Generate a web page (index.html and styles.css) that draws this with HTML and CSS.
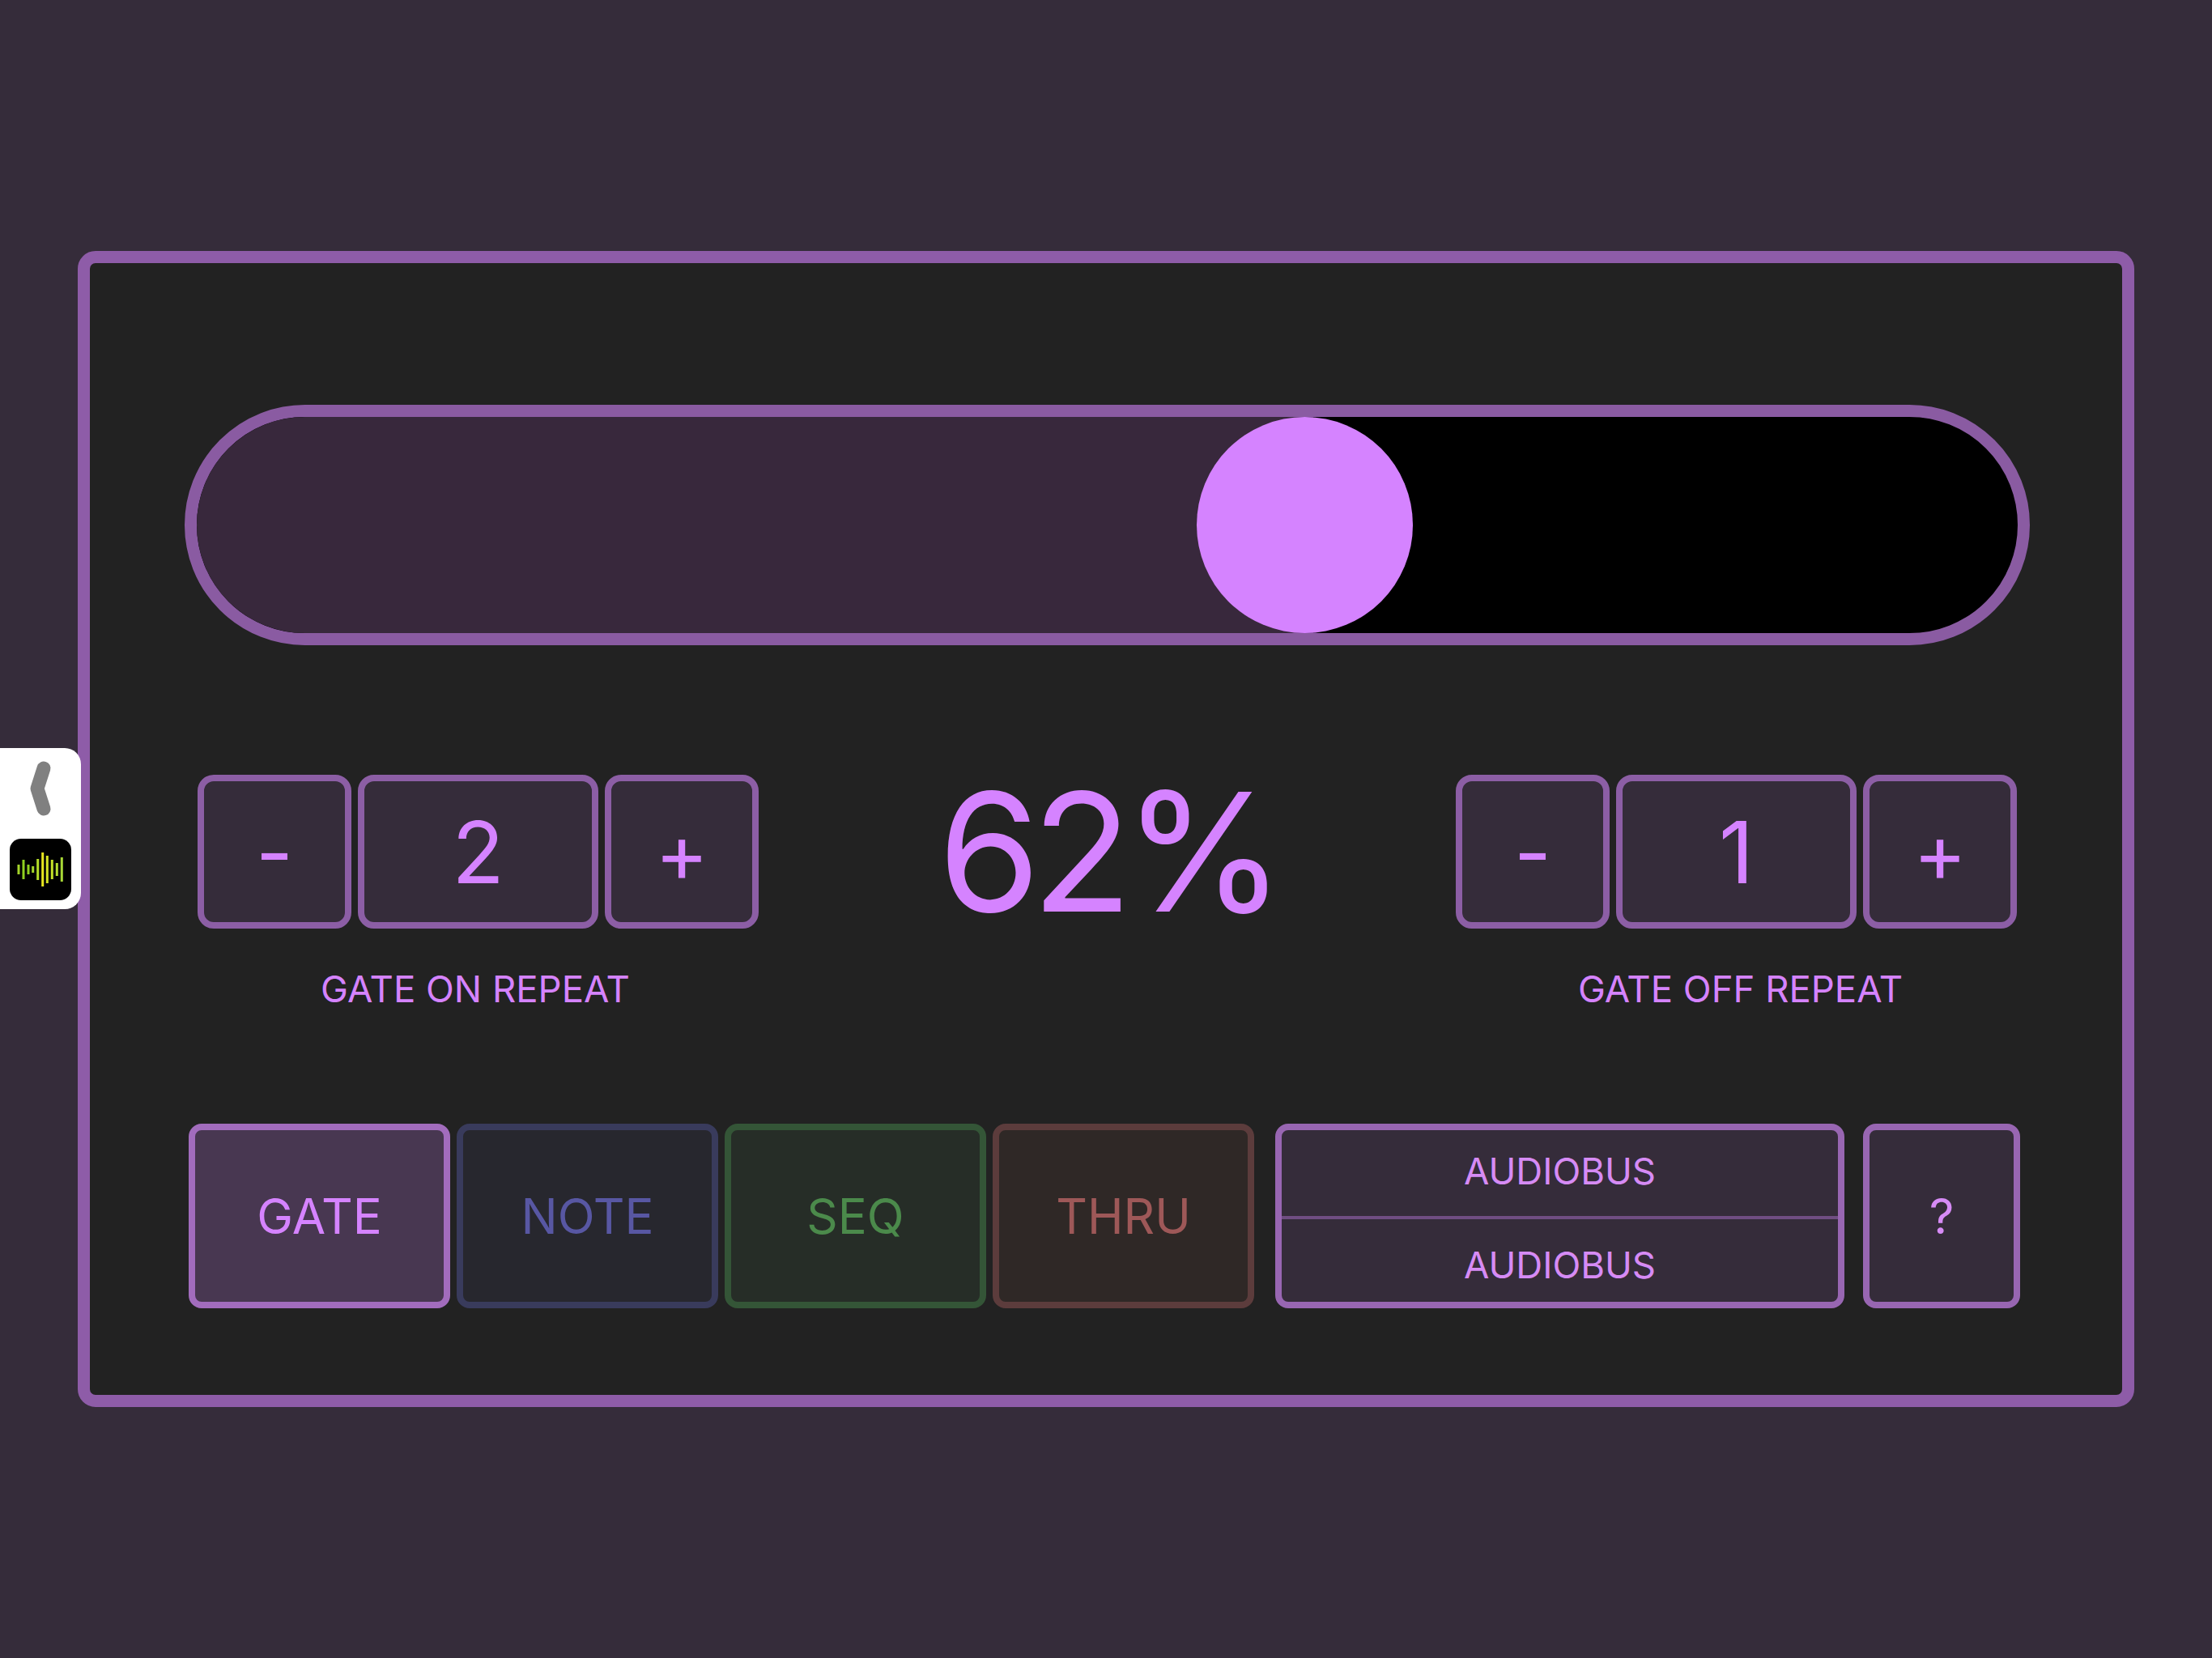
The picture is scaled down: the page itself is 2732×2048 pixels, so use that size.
FILE: index.html
```html
<!DOCTYPE html>
<html>
<head>
    <title>Gate</title>
    <link rel="stylesheet" href="styles.css">
</head>
<body>
    <div class="frame">
        <div class="slider">
            <div class="slider-fill"></div>
            <div class="slider-thumb"></div>
        </div>

        <div class="repeat-row">
            <div class="repeat">
                <div class="stepper">
                    <div class="step">-</div>
                    <div class="step-value">2</div>
                    <div class="step">+</div>
                </div>
                <div class="repeat-label label-on">GATE ON REPEAT</div>
            </div>
            <div class="percent">62%</div>
            <div class="repeat">
                <div class="stepper">
                    <div class="step">-</div>
                    <div class="step-value">1</div>
                    <div class="step">+</div>
                </div>
                <div class="repeat-label label-off">GATE OFF REPEAT</div>
            </div>
        </div>

        <div class="button-row">
            <div class="mode mode-gate">GATE</div>
            <div class="mode mode-note">NOTE</div>
            <div class="mode mode-seq">SEQ</div>
            <div class="mode mode-thru">THRU</div>
            <div class="audiobus">
                <div class="audiobus-top">AUDIOBUS</div>
                <div class="audiobus-bottom">AUDIOBUS</div>
            </div>
            <div class="help">?</div>
        </div>
    </div>

    <div class="side-tab">
        <svg class="side-chevron" width="100" height="90" viewBox="0 0 100 90">
            <polyline points="54,25 46,50 54,75" fill="none" stroke="#808080" stroke-width="17" stroke-linecap="round" stroke-linejoin="round"/>
        </svg>
        <svg class="side-icon" width="76" height="76" viewBox="0 0 76 76">
            <rect width="76" height="76" rx="14" fill="#000"/>
            <rect x="9.5" y="32" width="3" height="12" fill="#a4d42a"/>
            <rect x="15.5" y="26" width="3" height="24" fill="#8fd020"/>
            <rect x="21.5" y="32" width="3" height="12" fill="#8fd020"/>
            <rect x="27.2" y="34" width="3" height="8" fill="#a4d42a"/>
            <rect x="33.2" y="25" width="3" height="26" fill="#b4dc28"/>
            <rect x="39.2" y="17" width="3" height="42" fill="#e8e620"/>
            <rect x="44.8" y="21" width="3" height="34" fill="#d4e424"/>
            <rect x="50.8" y="26" width="3" height="24" fill="#c4e028"/>
            <rect x="56.8" y="30" width="3" height="16" fill="#b4dc30"/>
            <rect x="62.8" y="23" width="3" height="30" fill="#a8d836"/>
        </svg>
    </div>
</body>
</html>
```

FILE: styles.css
```css
body {
    margin: 0;
    padding: 310px 0 0 96px;
    height: 2048px;
    box-sizing: border-box;
    background-color: #352c3a;
    font-family: Inter, "Liberation Sans", sans-serif;
    color: #d583ff;
    overflow: hidden;
}
.frame {
    width: 2540px;
    height: 1428px;
    box-sizing: border-box;
    padding: 175px 114px 0 117px;
    background-color: #222222;
    border: 15px solid #8e5ca8;
    border-radius: 22px;
}

/* slider */
.slider {
    position: relative;
    height: 297px;
    box-sizing: border-box;
    background-color: #000;
    border: 15px solid #8a5ba2;
    border-radius: 149px;
    overflow: hidden;
}
.slider-fill {
    height: 100%;
    width: 61.3%;
    background-color: #38283c;
}
.slider-thumb {
    position: absolute;
    top: 0;
    left: 1235px;
    width: 267px;
    height: 267px;
    border-radius: 50%;
    background-color: #d583ff;
}

/* steppers */
.repeat-row {
    display: flex;
    justify-content: space-between;
    align-items: flex-start;
    height: 431px;
    margin-top: 160px;
    padding: 0 16px;
}
.stepper {
    display: flex;
    gap: 8px;
}
.step, .step-value {
    display: flex;
    justify-content: center;
    align-items: center;
    height: 190px;
    box-sizing: border-box;
    background-color: #352c3a;
    border: 8px solid #8c5ea5;
    border-radius: 20px;
}
.step {
    width: 190px;
    font-size: 100px;
}
.step-value {
    width: 297px;
    font-size: 106px;
}
.repeat-label {
    margin-top: 47px;
    font-size: 45.5px;
    line-height: 56px;
    text-align: center;
}
.label-on {
    margin-right: 7px;
}
.label-off {
    margin-left: 10px;
}
.percent {
    font-size: 204px;
    letter-spacing: -11px;
    line-height: 190px;
}

/* bottom buttons */
.button-row {
    display: flex;
    height: 228px;
    margin-left: 5px;
}
.mode, .help {
    display: flex;
    justify-content: center;
    align-items: center;
    box-sizing: border-box;
    border: 8px solid;
    border-radius: 16px;
    font-size: 60px;
}
.mode {
    width: 323px;
    margin-right: 8px;
}
.mode-gate {
    background-color: #483751;
    border-color: #a26cbd;
    color: #d583ff;
}
.mode-note {
    background-color: #27272e;
    border-color: #393b5c;
    color: #5857a3;
}
.mode-seq {
    background-color: #262d27;
    border-color: #345537;
    color: #4b8a4b;
}
.mode-thru {
    background-color: #2f2826;
    border-color: #5c3c3c;
    color: #9e5858;
}
.audiobus {
    display: flex;
    flex-direction: column;
    width: 703px;
    margin-left: 18px;
    box-sizing: border-box;
    background-color: #352c3a;
    border: 8px solid #9866b2;
    border-radius: 16px;
    font-size: 45.5px;
    color: #d68bf5;
}
.audiobus-top, .audiobus-bottom {
    display: flex;
    justify-content: center;
    align-items: center;
    box-sizing: border-box;
}
.audiobus-top {
    height: 110px;
    padding-bottom: 6px;
    border-bottom: 4px solid #704e82;
}
.audiobus-bottom {
    height: 102px;
    padding-top: 10px;
}
.help {
    width: 194px;
    margin-left: 23px;
    background-color: #352c3a;
    border-color: #9866b2;
    color: #d68bf5;
}

/* the tab stuck on the left edge */
.side-tab {
    position: absolute;
    left: 0;
    top: 924px;
    width: 100px;
    height: 199px;
    background-color: #fff;
    border-radius: 0 20px 20px 0;
}
.side-chevron {
    display: block;
}
.side-icon {
    display: block;
    margin: 22px 0 0 12px;
}
```
